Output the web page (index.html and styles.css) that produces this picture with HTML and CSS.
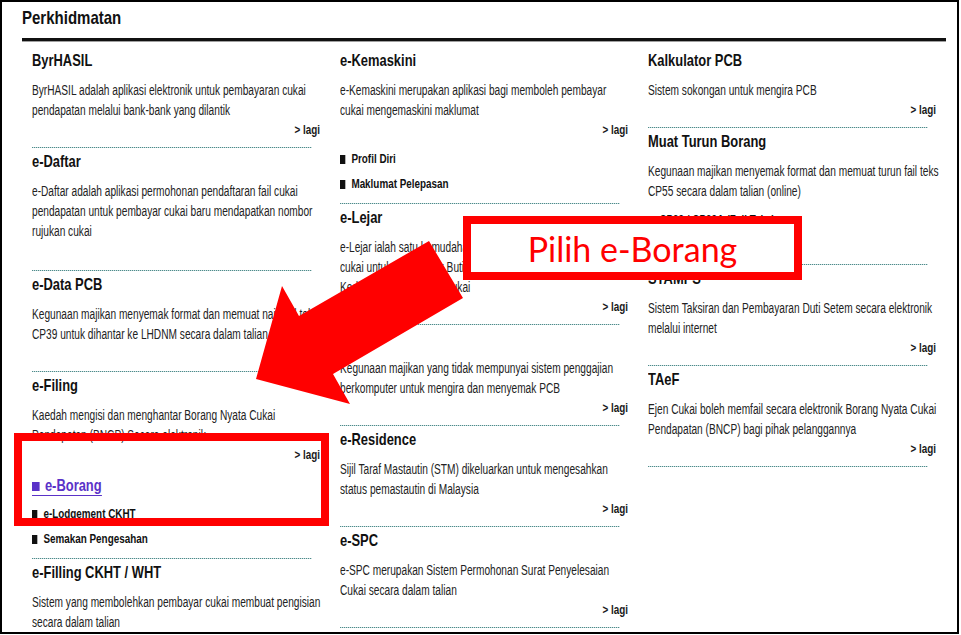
FILE: index.html
```html
<!DOCTYPE html>
<html lang="ms">
<head>
<meta charset="utf-8">
<title>Perkhidmatan</title>
<link rel="stylesheet" href="styles.css">
</head>
<body>
<div class="frame">
  <div class="page-head">
    <h1 class="page-title">Perkhidmatan</h1>
  </div>

  <div class="cols">
    <div class="col">
      <div class="svc">
        <h2 class="svc-title">ByrHASIL</h2>
        <p class="svc-text">ByrHASIL adalah aplikasi elektronik untuk pembayaran cukai<br>pendapatan melalui bank-bank yang dilantik</p>
        <div class="more"><a href="#">&gt; lagi</a></div>
      </div>
      <div class="svc">
        <h2 class="svc-title">e-Daftar</h2>
        <p class="svc-text">e-Daftar adalah aplikasi permohonan pendaftaran fail cukai<br>pendapatan untuk pembayar cukai baru mendapatkan nombor<br>rujukan cukai</p>
        <div class="more more-blank"></div>
      </div>
      <div class="svc">
        <h2 class="svc-title">e-Data PCB</h2>
        <p class="svc-text">Kegunaan majikan menyemak format dan memuat naik fail teks<br>CP39 untuk dihantar ke LHDNM secara dalam talian (online)</p>
        <div class="more"><a href="#">&gt; lagi</a></div>
      </div>
      <div class="svc">
        <h2 class="svc-title">e-Filing</h2>
        <p class="svc-text">Kaedah mengisi dan menghantar Borang Nyata Cukai<br>Pendapatan (BNCP) Secara elektronik</p>
        <div class="more"><a href="#">&gt; lagi</a></div>
        <ul class="links">
          <li class="hot"><a href="#"><span class="sq"></span>e-Borang</a></li>
          <li>e-Lodgement CKHT</li>
          <li>Semakan Pengesahan</li>
        </ul>
      </div>
      <div class="svc">
        <h2 class="svc-title">e-Filling CKHT / WHT</h2>
        <p class="svc-text">Sistem yang membolehkan pembayar cukai membuat pengisian<br>secara dalam talian</p>
        <div class="more"><a href="#">&gt; lagi</a></div>
      </div>
    </div>

    <div class="col">
      <div class="svc">
        <h2 class="svc-title">e-Kemaskini</h2>
        <p class="svc-text">e-Kemaskini merupakan aplikasi bagi memboleh pembayar<br>cukai mengemaskini maklumat</p>
        <div class="more"><a href="#">&gt; lagi</a></div>
        <ul class="links">
          <li>Profil Diri</li>
          <li>Maklumat Pelepasan</li>
        </ul>
      </div>
      <div class="svc">
        <h2 class="svc-title">e-Lejar</h2>
        <p class="svc-text">e-Lejar ialah satu kemudahan kepada pembayar<br>cukai untuk menyemak Butiran Lejar dan<br>Kedudukan akaun lejar cukai</p>
        <div class="more"><a href="#">&gt; lagi</a></div>
      </div>
      <div class="svc">
        <h2 class="svc-title">e-PCB</h2>
        <p class="svc-text">Kegunaan majikan yang tidak mempunyai sistem penggajian<br>berkomputer untuk mengira dan menyemak PCB</p>
        <div class="more"><a href="#">&gt; lagi</a></div>
      </div>
      <div class="svc">
        <h2 class="svc-title">e-Residence</h2>
        <p class="svc-text">Sijil Taraf Mastautin (STM) dikeluarkan untuk mengesahkan<br>status pemastautin di Malaysia</p>
        <div class="more"><a href="#">&gt; lagi</a></div>
      </div>
      <div class="svc">
        <h2 class="svc-title">e-SPC</h2>
        <p class="svc-text">e-SPC merupakan Sistem Permohonan Surat Penyelesaian<br>Cukai secara dalam talian</p>
        <div class="more"><a href="#">&gt; lagi</a></div>
      </div>
    </div>

    <div class="col">
      <div class="svc">
        <h2 class="svc-title">Kalkulator PCB</h2>
        <p class="svc-text">Sistem sokongan untuk mengira PCB</p>
        <div class="more"><a href="#">&gt; lagi</a></div>
      </div>
      <div class="svc">
        <h2 class="svc-title">Muat Turun Borang</h2>
        <p class="svc-text">Kegunaan majikan menyemak format dan memuat turun fail teks<br>CP55 secara dalam talian (online)</p>
        <ul class="links links-tail">
          <li>CP39 / CP39A (Fail Teks)</li>
          <li>CP55 / CP55D (Fail Teks)</li>
        </ul>
      </div>
      <div class="svc">
        <h2 class="svc-title">STAMPS</h2>
        <p class="svc-text">Sistem Taksiran dan Pembayaran Duti Setem secara elektronik<br>melalui internet</p>
        <div class="more"><a href="#">&gt; lagi</a></div>
      </div>
      <div class="svc">
        <h2 class="svc-title">TAeF</h2>
        <p class="svc-text">Ejen Cukai boleh memfail secara elektronik Borang Nyata Cukai<br>Pendapatan (BNCP) bagi pihak pelanggannya</p>
        <div class="more"><a href="#">&gt; lagi</a></div>
      </div>
    </div>
  </div>

  <svg class="arrow" width="955" height="630" viewBox="2 2 955 630" aria-hidden="true">
    <polygon points="429,241 463,298 333,374 350,404 256,379 282,286 299,316" fill="#ff0000"/>
  </svg>
  <div class="focus-box"></div>
  <div class="callout">Pilih e-Borang</div>
</div>
</body>
</html>
```

FILE: styles.css
```css
* {
  box-sizing: border-box;
}

html,
body {
  margin: 0;
  background: #ffffff;
}

body {
  font-family: "Liberation Sans", Arial, sans-serif;
  color: #222222;
}

.frame {
  position: relative;
  width: 959px;
  height: 634px;
  border: 2px solid #000000;
  overflow: hidden;
  background: #ffffff;
}

/* the source page is rendered in a tall, condensed face */
.page-title,
.svc-title,
.svc-text,
.links li {
  transform-origin: left center;
}

.page-head {
  margin: 4px 11px 0 20px;
  padding-bottom: 8px;
  border-bottom: 3px solid #111111;
  box-shadow: 0 1px 0 #a0a0a0;
}

.page-title {
  margin: 0;
  font-size: 19px;
  line-height: 24px;
  font-weight: bold;
  color: #111111;
  transform: scaleX(0.79);
}

.cols {
  display: grid;
  grid-template-columns: repeat(3, 288px);
  column-gap: 20px;
  align-items: start;
  padding: 6px 0 0 30px;
}

.svc::after {
  content: "";
  display: block;
  width: 280px;
  height: 1px;
  margin-top: 7px;
  background: repeating-linear-gradient(90deg, #4f8b8b 0 1px, #c9dede 1px 2px);
}

.svc-title {
  margin: 4px 0 0;
  font-size: 17px;
  line-height: 20px;
  font-weight: bold;
  color: #111111;
  transform: scaleX(0.76);
}

.svc-text {
  margin: 9px 0 0;
  font-size: 14px;
  line-height: 20px;
  white-space: nowrap;
  color: #222222;
  transform: scaleX(0.725);
}

.more {
  height: 20px;
  font-size: 13px;
  line-height: 20px;
  font-weight: bold;
  text-align: right;
  transform: scaleX(0.76);
  transform-origin: right center;
}

.more a {
  color: #1a1a1a;
  text-decoration: none;
}

.more-blank {
  height: 22px;
}

.links {
  list-style: none;
  margin: 6px 0 0;
  padding: 0;
}

.links-tail {
  margin: 6px 0 0;
}

.links li {
  font-size: 13px;
  line-height: 25px;
  font-weight: bold;
  color: #111111;
  white-space: nowrap;
  transform: scaleX(0.76);
}

.links li::before {
  content: "";
  display: inline-block;
  width: 7px;
  height: 9px;
  margin-right: 8px;
  vertical-align: -1px;
  background: #111111;
}

.links li.hot {
  font-size: 17px;
  line-height: 30px;
}

.links li.hot::before {
  content: none;
}

.hot a {
  color: #5a32c8;
  text-decoration: none;
  border-bottom: 1px solid #5a32c8;
}

.hot .sq {
  display: inline-block;
  width: 10px;
  height: 9px;
  margin-right: 7px;
  background: #5a32c8;
}

.arrow {
  position: absolute;
  left: 0;
  top: 0;
  pointer-events: none;
}

.focus-box {
  position: absolute;
  left: 12px;
  top: 431px;
  width: 315px;
  height: 93px;
  border: 8px solid #ff0000;
}

.callout {
  position: absolute;
  left: 461px;
  top: 214px;
  width: 339px;
  height: 64px;
  border: 8px solid #ff0000;
  background: #ffffff;
  display: flex;
  align-items: center;
  justify-content: center;
  font-family: Lato, "Open Sans", sans-serif;
  font-size: 34px;
  color: #ff0000;
}
```
